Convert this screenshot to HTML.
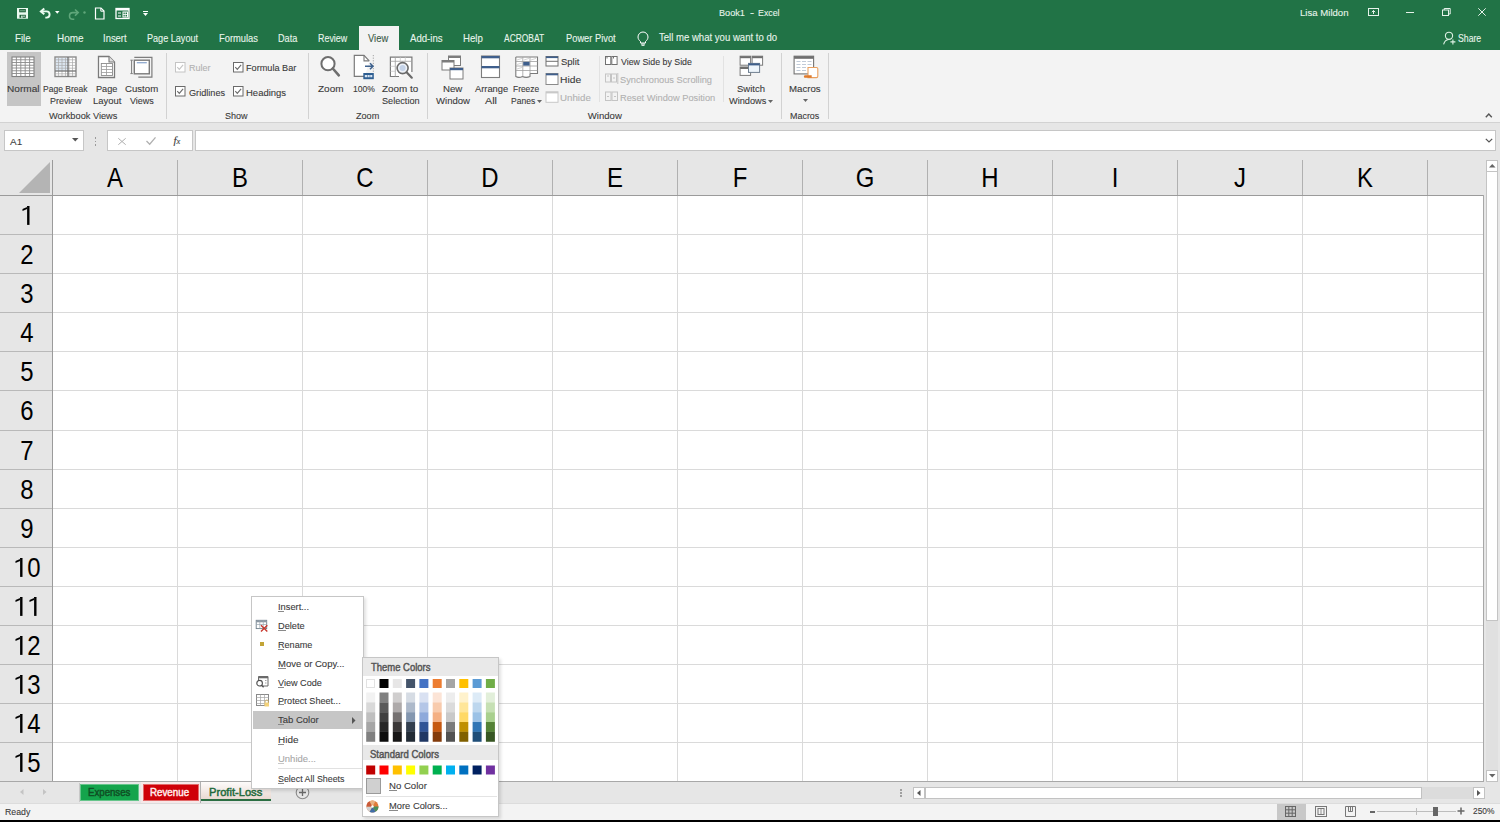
<!DOCTYPE html><html><head><meta charset="utf-8"><title>Book1 - Excel</title><style>
*{margin:0;padding:0;box-sizing:border-box}
html,body{width:1500px;height:822px;overflow:hidden;background:#fff;font-family:"Liberation Sans",sans-serif;position:relative}
.a{position:absolute}
.t{position:absolute;white-space:nowrap;line-height:1;transform-origin:0 0;-webkit-text-stroke:0.1px currentColor}
.h{-webkit-text-stroke:0}
svg{overflow:visible}
</style></head><body>
<div class="a" style="left:0px;top:0px;width:1500px;height:50px;background:#217346;"></div>
<div class="a" style="left:359px;top:26px;width:40px;height:24px;background:#f3f3f3;"></div>
<svg class="a" style="left:16px;top:7px" width="14" height="13" viewBox="0 0 14 13"><rect x="1" y="1" width="11" height="10.7" fill="#eafaf0"/><rect x="3.2" y="2" width="6.6" height="3.3" fill="#1d5e38"/><rect x="4" y="2.8" width="5" height="1.6" fill="#5f9c78"/><rect x="3.5" y="7.8" width="6.3" height="3" fill="#1d5e38"/><rect x="5.2" y="8.6" width="1.4" height="2.2" fill="#eafaf0"/><rect x="7.3" y="8.6" width="1.4" height="1.2" fill="#eafaf0"/></svg>
<svg class="a" style="left:39px;top:6px" width="14" height="13" viewBox="0 0 14 13"><path d="M5.3 2.6L1.9 5.4 5.3 8.2" fill="none" stroke="#eafaf0" stroke-width="2"/><path d="M2.2 5.4h5.3a3.1 3.1 0 0 1 0 6.2H6.3" fill="none" stroke="#eafaf0" stroke-width="1.9"/></svg>
<svg class="a" style="left:55px;top:11px" width="5" height="3" viewBox="0 0 5 3"><path d="M0 0h4.5l-2.25 2.7z" fill="#fff"/></svg>
<svg class="a" style="left:66px;top:7px" width="14" height="13" viewBox="0 0 14 13"><path d="M9 2.5l3.2 3.1L9 8.7" fill="none" stroke="#5fa67a" stroke-width="1.6"/><path d="M12 5.6H6.8a3.3 3.3 0 0 0 0 6.6h1.5" fill="none" stroke="#5fa67a" stroke-width="1.6"/></svg>
<svg class="a" style="left:83px;top:11px" width="3" height="3" viewBox="0 0 3 3"><circle cx="1.5" cy="1.5" r="1.2" fill="#5fa67a"/></svg>
<svg class="a" style="left:94px;top:7px" width="12" height="13" viewBox="0 0 12 13"><path d="M1.5 1h5.5l3 3v8h-8.5z" fill="none" stroke="#fff" stroke-width="1.2"/><path d="M6.8 1v3.2h3.2" fill="none" stroke="#fff" stroke-width="1"/></svg>
<svg class="a" style="left:115px;top:7px" width="15" height="13" viewBox="0 0 15 13"><rect x="1" y="1.5" width="13" height="10" fill="none" stroke="#fff" stroke-width="1.3"/><rect x="1" y="1.5" width="13" height="2" fill="#fff"/><path d="M3 6h3M3 9h3" stroke="#fff" stroke-width="1.2"/><rect x="8" y="5" width="4.5" height="5" fill="none" stroke="#fff" stroke-width="1"/><path d="M8 7.5h4.5M10.2 5v5" stroke="#fff" stroke-width="0.8"/></svg>
<svg class="a" style="left:143px;top:11px" width="5" height="5" viewBox="0 0 5 5"><path d="M0 0.5h5" stroke="#fff" stroke-width="1"/><path d="M0 2h5l-2.5 3z" fill="#fff"/></svg>
<div class="t" style="left:719.2px;top:7.9px;font-size:9.86px;color:#e8f5ec;transform:scaleX(0.927);">Book1</div>
<div class="t" style="left:750.4px;top:7.9px;font-size:9.86px;color:#e8f5ec;transform:scaleX(1.242);">-</div>
<div class="t" style="left:758.0px;top:7.9px;font-size:9.86px;color:#e8f5ec;transform:scaleX(0.896);">Excel</div>
<div class="t" style="left:1300.1px;top:7.7px;font-size:9.86px;color:#e8f5ec;transform:scaleX(0.975);">Lisa Mildon</div>
<svg class="a" style="left:1368px;top:8px" width="11" height="8" viewBox="0 0 11 8"><rect x="0.5" y="0.5" width="10" height="7" fill="none" stroke="#e6f2ea" stroke-width="1"/><path d="M5.5 6v-3.5M3.8 4.2l1.7-1.7 1.7 1.7" fill="none" stroke="#e6f2ea" stroke-width="1"/></svg>
<div class="a" style="left:1406px;top:12px;width:8px;height:1px;background:#e6f2ea;"></div>
<svg class="a" style="left:1442px;top:8px" width="9" height="8" viewBox="0 0 9 8"><rect x="0.5" y="2" width="6" height="5.5" fill="none" stroke="#e6f2ea" stroke-width="1"/><path d="M2.2 2v-1.5h6v5.5h-1.7" fill="none" stroke="#e6f2ea" stroke-width="1"/></svg>
<svg class="a" style="left:1478px;top:8px" width="8" height="8" viewBox="0 0 8 8"><path d="M0.3 0.3l7.4 7.4M7.7 0.3l-7.4 7.4" stroke="#e6f2ea" stroke-width="1"/></svg>
<div class="t" style="left:14.8px;top:33.5px;font-size:10.14px;color:#e8f5ec;transform:scaleX(0.956);">File</div>
<div class="t" style="left:56.7px;top:33.5px;font-size:10.14px;color:#e8f5ec;transform:scaleX(0.982);">Home</div>
<div class="t" style="left:102.7px;top:33.5px;font-size:10.14px;color:#e8f5ec;transform:scaleX(0.934);">Insert</div>
<div class="t" style="left:146.9px;top:33.5px;font-size:10.14px;color:#e8f5ec;transform:scaleX(0.898);">Page Layout</div>
<div class="t" style="left:218.9px;top:33.5px;font-size:10.14px;color:#e8f5ec;transform:scaleX(0.924);">Formulas</div>
<div class="t" style="left:278.3px;top:33.5px;font-size:10.14px;color:#e8f5ec;transform:scaleX(0.903);">Data</div>
<div class="t" style="left:318.0px;top:33.5px;font-size:10.14px;color:#e8f5ec;transform:scaleX(0.881);">Review</div>
<div class="t" style="left:409.6px;top:33.5px;font-size:10.14px;color:#e8f5ec;transform:scaleX(0.950);">Add-ins</div>
<div class="t" style="left:463.1px;top:33.5px;font-size:10.14px;color:#e8f5ec;transform:scaleX(0.953);">Help</div>
<div class="t" style="left:504.2px;top:33.5px;font-size:10.14px;color:#e8f5ec;transform:scaleX(0.833);">ACROBAT</div>
<div class="t" style="left:566.0px;top:33.5px;font-size:10.14px;color:#e8f5ec;transform:scaleX(0.920);">Power Pivot</div>
<div class="t" style="left:368.2px;top:33.5px;font-size:10.14px;color:#3b5a48;transform:scaleX(0.928);">View</div>
<svg class="a" style="left:637px;top:32px" width="12" height="14" viewBox="0 0 12 14"><path d="M3.5 9.5C2 8.3 1 6.8 1 5A5 5 0 0 1 11 5c0 1.8-1 3.3-2.5 4.5v1.5h-5z" fill="none" stroke="#fff" stroke-width="1"/><path d="M4 12h4M4.5 13.3h3" stroke="#fff" stroke-width="1"/></svg>
<div class="t" style="left:658.8px;top:33.4px;font-size:10.14px;color:#e8f5ec;transform:scaleX(0.945);">Tell me what you want to do</div>
<svg class="a" style="left:1442px;top:31px" width="15" height="15" viewBox="0 0 15 15"><circle cx="7" cy="4.8" r="3.6" fill="none" stroke="#dff2e5" stroke-width="1.1"/><path d="M1.6 13.3C2.3 10.6 4.3 8.8 6.6 8.5" fill="none" stroke="#dff2e5" stroke-width="1.1"/><path d="M10.9 8.4v5M8.4 10.9h5" stroke="#dff2e5" stroke-width="1.1"/></svg>
<div class="t" style="left:1458.4px;top:33.8px;font-size:10.43px;color:#e8f5ec;transform:scaleX(0.834);">Share</div>
<div class="a" style="left:0px;top:50px;width:1500px;height:72px;background:#f3f3f3;"></div>
<div class="a" style="left:166px;top:53px;width:1px;height:66px;background:#d2d2d2;"></div>
<div class="a" style="left:308px;top:53px;width:1px;height:66px;background:#d2d2d2;"></div>
<div class="a" style="left:427px;top:53px;width:1px;height:66px;background:#d2d2d2;"></div>
<div class="a" style="left:781px;top:53px;width:1px;height:66px;background:#d2d2d2;"></div>
<div class="a" style="left:828px;top:53px;width:1px;height:66px;background:#d2d2d2;"></div>
<div class="a" style="left:599px;top:56px;width:1px;height:46px;background:#e2e2e2;"></div>
<div class="a" style="left:723px;top:56px;width:1px;height:46px;background:#e2e2e2;"></div>
<div class="a" style="left:7px;top:52px;width:34px;height:54px;background:#c5c5c5;"></div>
<svg class="a" style="left:11px;top:56px" width="24" height="21" viewBox="0 0 24 21"><rect x="1" y="1" width="22" height="19.5" fill="#fff" stroke="#808080" stroke-width="1.1"/><path d="M5.4 1v19" stroke="#8a8a8a" stroke-width="0.9"/><path d="M9.8 1v19" stroke="#8a8a8a" stroke-width="0.9"/><path d="M14.2 1v19" stroke="#8a8a8a" stroke-width="0.9"/><path d="M18.6 1v19" stroke="#8a8a8a" stroke-width="0.9"/><path d="M1 3.75h22" stroke="#8a8a8a" stroke-width="0.9"/><path d="M1 6.50h22" stroke="#8a8a8a" stroke-width="0.9"/><path d="M1 9.25h22" stroke="#8a8a8a" stroke-width="0.9"/><path d="M1 12.00h22" stroke="#8a8a8a" stroke-width="0.9"/><path d="M1 14.75h22" stroke="#8a8a8a" stroke-width="0.9"/><path d="M1 17.50h22" stroke="#8a8a8a" stroke-width="0.9"/></svg>
<svg class="a" style="left:54px;top:56px" width="23" height="22" viewBox="0 0 23 22"><rect x="1" y="1" width="21" height="19.5" fill="#fff" stroke="#8a8a8a" stroke-width="1.4"/><rect x="2" y="2" width="12" height="13" fill="#dde8f3"/><path d="M4.5 1v19" stroke="#a9a9a9" stroke-width="0.7"/><path d="M8.0 1v19" stroke="#a9a9a9" stroke-width="0.7"/><path d="M11.5 1v19" stroke="#a9a9a9" stroke-width="0.7"/><path d="M15.0 1v19" stroke="#a9a9a9" stroke-width="0.7"/><path d="M18.5 1v19" stroke="#a9a9a9" stroke-width="0.7"/><path d="M1 3.8h21" stroke="#a9a9a9" stroke-width="0.7"/><path d="M1 6.6h21" stroke="#a9a9a9" stroke-width="0.7"/><path d="M1 9.4h21" stroke="#a9a9a9" stroke-width="0.7"/><path d="M1 12.2h21" stroke="#a9a9a9" stroke-width="0.7"/><path d="M1 15.0h21" stroke="#a9a9a9" stroke-width="0.7"/><path d="M1 17.8h21" stroke="#a9a9a9" stroke-width="0.7"/><path d="M14 1v19.5M1 15h21" stroke="#6b6b6b" stroke-width="1.2"/></svg>
<svg class="a" style="left:96px;top:54px" width="22" height="26" viewBox="0 0 22 26"><path d="M2.5 2.5H13L18.5 8V23.5H2.5Z" fill="#fff" stroke="#7a7a7a" stroke-width="1.3"/><path d="M13 2.5V8H18.5" fill="#e0e0e0" stroke="#7a7a7a" stroke-width="1.1"/><rect x="5.3" y="9.5" width="11.2" height="12" fill="none" stroke="#8a8a8a" stroke-width="0.9"/><path d="M5.3 12.5h11.2M5.3 15.5h11.2M5.3 18.5h11.2M10.5 9.5v12" stroke="#9a9a9a" stroke-width="0.8"/></svg>
<svg class="a" style="left:128px;top:54px" width="26" height="26" viewBox="0 0 26 26"><path d="M6.3 3.3H23.9V23.1H10.3" fill="none" stroke="#7d7d7d" stroke-width="1.2"/><rect x="6.3" y="6.2" width="15" height="13.6" fill="#fff" stroke="#7a7a7a" stroke-width="1.4"/><path d="M8.8 8.7h10" stroke="#8fa9cf" stroke-width="1.3"/><path d="M3.6 6.2v13.4M2.4 6.2h2.4M2.4 19.6h2.4" stroke="#7d7d7d" stroke-width="1"/></svg>
<div class="t" style="left:7.2px;top:84.0px;font-size:9.57px;color:#3a3a3a;transform:scaleX(1.054);">Normal</div>
<div class="t" style="left:43.1px;top:84.0px;font-size:9.57px;color:#3a3a3a;transform:scaleX(0.890);">Page Break</div>
<div class="t" style="left:50.0px;top:96.1px;font-size:9.57px;color:#3a3a3a;transform:scaleX(0.934);">Preview</div>
<div class="t" style="left:96.3px;top:84.0px;font-size:9.57px;color:#3a3a3a;transform:scaleX(0.960);">Page</div>
<div class="t" style="left:92.7px;top:96.1px;font-size:9.57px;color:#3a3a3a;transform:scaleX(0.986);">Layout</div>
<div class="t" style="left:125.1px;top:84.0px;font-size:9.57px;color:#3a3a3a;transform:scaleX(1.006);">Custom</div>
<div class="t" style="left:129.8px;top:96.1px;font-size:9.57px;color:#3a3a3a;transform:scaleX(0.941);">Views</div>
<div class="t" style="left:48.8px;top:110.9px;font-size:9.57px;color:#3a3a3a;transform:scaleX(0.965);">Workbook Views</div>
<svg class="a" style="left:175px;top:62px" width="11" height="11" viewBox="0 0 11 11"><rect x="0.5" y="0.5" width="9.5" height="9.5" fill="#fff" stroke="#c4c4c4" stroke-width="1"/><path d="M2.3 5.2l2 2.2 3.8-4.6" fill="none" stroke="#c4c4c4" stroke-width="1.1"/></svg>
<svg class="a" style="left:233px;top:62px" width="11" height="11" viewBox="0 0 11 11"><rect x="0.5" y="0.5" width="9.5" height="9.5" fill="#fff" stroke="#6a6a6a" stroke-width="1"/><path d="M2.3 5.2l2 2.2 3.8-4.6" fill="none" stroke="#6a6a6a" stroke-width="1.1"/></svg>
<svg class="a" style="left:175px;top:86px" width="11" height="11" viewBox="0 0 11 11"><rect x="0.5" y="0.5" width="9.5" height="9.5" fill="#fff" stroke="#6a6a6a" stroke-width="1"/><path d="M2.3 5.2l2 2.2 3.8-4.6" fill="none" stroke="#6a6a6a" stroke-width="1.1"/></svg>
<svg class="a" style="left:233px;top:86px" width="11" height="11" viewBox="0 0 11 11"><rect x="0.5" y="0.5" width="9.5" height="9.5" fill="#fff" stroke="#6a6a6a" stroke-width="1"/><path d="M2.3 5.2l2 2.2 3.8-4.6" fill="none" stroke="#6a6a6a" stroke-width="1.1"/></svg>
<div class="t" style="left:188.8px;top:63.3px;font-size:9.57px;color:#b1b1b1;transform:scaleX(0.936);">Ruler</div>
<div class="t" style="left:246.3px;top:63.3px;font-size:9.57px;color:#3a3a3a;transform:scaleX(0.957);">Formula Bar</div>
<div class="t" style="left:189.0px;top:87.5px;font-size:9.57px;color:#3a3a3a;transform:scaleX(0.956);">Gridlines</div>
<div class="t" style="left:246.2px;top:87.5px;font-size:9.57px;color:#3a3a3a;transform:scaleX(0.992);">Headings</div>
<div class="t" style="left:225.4px;top:110.9px;font-size:9.57px;color:#3a3a3a;transform:scaleX(0.943);">Show</div>
<svg class="a" style="left:318px;top:55px" width="24" height="24" viewBox="0 0 24 24"><circle cx="10" cy="8.7" r="6.6" fill="#fff" stroke="#6e6e6e" stroke-width="2"/><path d="M14.8 13.5l6 6.8" stroke="#6e6e6e" stroke-width="2.6" stroke-linecap="round"/></svg>
<svg class="a" style="left:352px;top:53px" width="24" height="28" viewBox="0 0 24 28"><path d="M13 23.3H2.3V2.3H12L17.2 7.9" fill="#fff" stroke="#7a7a7a" stroke-width="1.2"/><path d="M12 2.3V7.9H17.2" fill="none" stroke="#7a7a7a" stroke-width="1.1"/><path d="M21.3 2v18" stroke="#9a9a9a" stroke-width="0.9" stroke-dasharray="1.2 1.4"/><path d="M13 13.3h8M18 10.3l3 3-3 3" fill="none" stroke="#3e628e" stroke-width="1.5"/><rect x="11.3" y="20" width="10.5" height="6.2" fill="#2f5f92"/><path d="M12.8 23.1h7.5" stroke="#d6e4f3" stroke-width="2.4" stroke-dasharray="2.2 0.5"/></svg>
<svg class="a" style="left:388px;top:55px" width="27" height="26" viewBox="0 0 27 26"><path d="M11 21.5H2.4V2.1H23.9V17" fill="#fff" stroke="#7a7a7a" stroke-width="1.2"/><path d="M2.4 6.3H23.9M7.3 2.1V21.5" stroke="#a0a0a0" stroke-width="0.8"/><path d="M12.3 2.1v4.2M17.3 2.1v4.2M2.4 11.3h4.9M2.4 16.3h4.9" stroke="#c4c4c4" stroke-width="0.7"/><circle cx="14.6" cy="13.1" r="5.5" fill="#eef2f8" stroke="#6a6a6a" stroke-width="1.6"/><circle cx="14.6" cy="13.1" r="3" fill="#c5d3e8"/><path d="M18.6 17.3l5.2 5.4" stroke="#6a6a6a" stroke-width="2.2" stroke-linecap="round"/></svg>
<div class="t" style="left:318.4px;top:84.0px;font-size:9.57px;color:#3a3a3a;transform:scaleX(1.045);">Zoom</div>
<div class="t" style="left:353.2px;top:84.0px;font-size:9.57px;color:#3a3a3a;transform:scaleX(0.896);">100%</div>
<div class="t" style="left:382.3px;top:84.0px;font-size:9.57px;color:#3a3a3a;transform:scaleX(1.032);">Zoom to</div>
<div class="t" style="left:382.0px;top:96.1px;font-size:9.57px;color:#3a3a3a;transform:scaleX(0.955);">Selection</div>
<div class="t" style="left:355.7px;top:110.9px;font-size:9.57px;color:#3a3a3a;transform:scaleX(0.952);">Zoom</div>
<svg class="a" style="left:441px;top:55px" width="24" height="26" viewBox="0 0 24 26"><rect x="7.5" y="1" width="12" height="9.5" fill="#fff" stroke="#7d7d7d" stroke-width="1"/><rect x="7.5" y="1" width="12" height="2" fill="#7d7d7d"/><rect x="1" y="5.5" width="12" height="9.5" fill="#fff" stroke="#7d7d7d" stroke-width="1"/><rect x="1" y="5.5" width="12" height="2" fill="#7d7d7d"/><rect x="9" y="13" width="13" height="11" fill="#fff" stroke="#7d7d7d" stroke-width="1"/><rect x="9" y="13" width="13" height="2.2" fill="#3f5f8c"/></svg>
<svg class="a" style="left:480px;top:55px" width="21" height="24" viewBox="0 0 21 24"><rect x="1.5" y="1" width="18" height="21.5" fill="#fff" stroke="#7d7d7d" stroke-width="1.1"/><rect x="1.5" y="1" width="18" height="2.3" fill="#3f5f8c"/><rect x="1.5" y="11" width="18" height="2.3" fill="#3f5f8c"/></svg>
<svg class="a" style="left:514px;top:55px" width="25" height="23" viewBox="0 0 25 23"><path d="M1.8 2H23.5V18.5H16M1.8 2V21.5C3.5 22.6 6.2 22.6 8.5 21.5C10.8 22.6 13.5 22.6 16 21.5V18.5" fill="#fff" stroke="#7a7a7a" stroke-width="1.1"/><path d="M1.8 6.5H23.5M1.8 11H23.5M1.8 15.5H23.5M8.8 2V21.5M16 2V18.5" stroke="#a0a0a0" stroke-width="0.8"/><path d="M3 5l5-1.6M10 5l5-1.6M17 5l5-1.6M3 9.5l5-1.6M3 14l5-1.6" stroke="#b8b8b8" stroke-width="0.6"/><rect x="9.2" y="6.9" width="6.4" height="3.7" fill="#3f5f8c"/></svg>
<svg class="a" style="left:545px;top:55px" width="14" height="12" viewBox="0 0 14 12"><rect x="1" y="1.5" width="12" height="9.5" fill="#fff" stroke="#707070" stroke-width="1"/><rect x="1" y="1.5" width="12" height="1.6" fill="#3f5f8c"/><path d="M1 6.3h12" stroke="#707070" stroke-width="1"/></svg>
<svg class="a" style="left:545px;top:72px" width="14" height="13" viewBox="0 0 14 13"><rect x="1" y="1.5" width="12" height="11" fill="#fff" stroke="#8a8a8a" stroke-width="1"/><rect x="1" y="1.5" width="12" height="1.8" fill="#3f5f8c"/></svg>
<svg class="a" style="left:545px;top:91px" width="14" height="12" viewBox="0 0 14 12"><rect x="1" y="0.8" width="12" height="10.5" fill="#fff" stroke="#c8c8c8" stroke-width="1"/><rect x="1" y="0.8" width="12" height="1.6" fill="#c8c8c8"/></svg>
<div class="t" style="left:442.9px;top:84.0px;font-size:9.57px;color:#3a3a3a;transform:scaleX(1.010);">New</div>
<div class="t" style="left:436.0px;top:96.1px;font-size:9.57px;color:#3a3a3a;">Window</div>
<div class="t" style="left:474.6px;top:84.0px;font-size:9.57px;color:#3a3a3a;transform:scaleX(0.975);">Arrange</div>
<div class="t" style="left:484.9px;top:96.1px;font-size:9.57px;color:#3a3a3a;transform:scaleX(1.126);">All</div>
<div class="t" style="left:513.0px;top:84.0px;font-size:9.57px;color:#3a3a3a;transform:scaleX(0.879);">Freeze</div>
<div class="t" style="left:510.6px;top:96.1px;font-size:9.57px;color:#3a3a3a;transform:scaleX(0.892);">Panes</div>
<svg class="a" style="left:537px;top:100px" width="5" height="3" viewBox="0 0 5 3"><path d="M0 0h5l-2.5 3z" fill="#666"/></svg>
<div class="t" style="left:560.6px;top:57.1px;font-size:9.57px;color:#3a3a3a;transform:scaleX(0.993);">Split</div>
<div class="t" style="left:560.2px;top:74.7px;font-size:9.57px;color:#3a3a3a;transform:scaleX(1.073);">Hide</div>
<div class="t" style="left:560.3px;top:92.8px;font-size:9.57px;color:#b1b1b1;transform:scaleX(1.018);">Unhide</div>
<svg class="a" style="left:605px;top:56px" width="13" height="10" viewBox="0 0 13 10"><rect x="0.5" y="0.5" width="5.3" height="8" fill="#fff" stroke="#707070" stroke-width="1"/><rect x="6.8" y="0.5" width="5.3" height="8" fill="#fff" stroke="#707070" stroke-width="1"/><path d="M2 0.5v2M8.5 0.5v2" stroke="#707070" stroke-width="1"/></svg>
<svg class="a" style="left:605px;top:73px" width="14" height="12" viewBox="0 0 14 12"><rect x="0.5" y="1" width="5" height="8" fill="none" stroke="#c4c4c4" stroke-width="1"/><rect x="6.5" y="1" width="5" height="8" fill="none" stroke="#c4c4c4" stroke-width="1"/><path d="M12.8 0v11M2 3h2M8 5h2" stroke="#c4c4c4" stroke-width="1"/></svg>
<svg class="a" style="left:605px;top:91px" width="13" height="11" viewBox="0 0 13 11"><rect x="0.5" y="1" width="5.5" height="8.5" fill="none" stroke="#c4c4c4" stroke-width="1"/><rect x="7" y="1" width="5.5" height="8.5" fill="none" stroke="#c4c4c4" stroke-width="1"/><path d="M2 5.5h2M9 5.5h2" stroke="#c4c4c4" stroke-width="1.2"/></svg>
<div class="t" style="left:620.8px;top:57.1px;font-size:9.57px;color:#3a3a3a;transform:scaleX(0.922);">View Side by Side</div>
<div class="t" style="left:620.4px;top:75.2px;font-size:9.57px;color:#b1b1b1;transform:scaleX(0.967);">Synchronous Scrolling</div>
<div class="t" style="left:620.1px;top:92.9px;font-size:9.57px;color:#b1b1b1;transform:scaleX(0.968);">Reset Window Position</div>
<div class="t" style="left:587.8px;top:110.9px;font-size:9.57px;color:#3a3a3a;">Window</div>
<svg class="a" style="left:738px;top:54px" width="27" height="24" viewBox="0 0 27 24"><rect x="2.1" y="2.2" width="10.5" height="9" fill="#fff" stroke="#7a7a7a" stroke-width="1"/><rect x="2.1" y="2.2" width="10.5" height="2" fill="#6e6e6e"/><rect x="14.1" y="2.2" width="10.5" height="9" fill="#fff" stroke="#7a7a7a" stroke-width="1"/><rect x="14.1" y="2.2" width="10.5" height="2" fill="#6e6e6e"/><rect x="2.1" y="13" width="10.5" height="8.4" fill="#fff" stroke="#7a7a7a" stroke-width="1"/><rect x="2.1" y="13" width="10.5" height="2" fill="#6e6e6e"/><rect x="10.5" y="9.4" width="11.1" height="9" fill="#eef5fb" stroke="#6f7f90" stroke-width="1"/><rect x="10.5" y="9.4" width="11.1" height="2" fill="#3f5f8c"/></svg>
<div class="t" style="left:737.4px;top:84.0px;font-size:9.57px;color:#3a3a3a;transform:scaleX(0.992);">Switch</div>
<div class="t" style="left:729.0px;top:96.1px;font-size:9.57px;color:#3a3a3a;transform:scaleX(0.963);">Windows</div>
<svg class="a" style="left:768px;top:100px" width="5" height="3" viewBox="0 0 5 3"><path d="M0 0h5l-2.5 3z" fill="#666"/></svg>
<svg class="a" style="left:792px;top:54px" width="28" height="26" viewBox="0 0 28 26"><rect x="2.1" y="2.2" width="19.5" height="17.7" fill="#fff" stroke="#737373" stroke-width="1.1"/><rect x="2.1" y="2.2" width="19.5" height="2.6" fill="#6e6e6e"/><path d="M4.5 7.5h4M10 7.5h4M15.5 7.5h4M4.5 10.5h4M10 10.5h4M15.5 10.5h4M4.5 13.5h4M10 13.5h4M4.5 16.5h4M10 16.5h4" stroke="#b9c4d2" stroke-width="0.9"/><path d="M16 13.5h8.5c0.8 0 1.3 0.5 1.3 1.3v7.5c0 0.8-0.5 1.3-1.3 1.3H16z" fill="#fff" stroke="#e9a060" stroke-width="1.1"/><path d="M13.2 21.2h6.5v2.6h-6.5c-0.8 0-1.3-0.6-1.3-1.3s0.5-1.3 1.3-1.3z" fill="#e07b2c"/></svg>
<div class="t" style="left:789.0px;top:84.0px;font-size:9.57px;color:#3a3a3a;transform:scaleX(1.011);">Macros</div>
<svg class="a" style="left:803px;top:99px" width="5" height="3" viewBox="0 0 5 3"><path d="M0 0h5l-2.5 3z" fill="#666"/></svg>
<div class="t" style="left:790.0px;top:110.9px;font-size:9.57px;color:#3a3a3a;transform:scaleX(0.935);">Macros</div>
<svg class="a" style="left:1485px;top:112px" width="8" height="7" viewBox="0 0 8 7"><path d="M0.8 5.2l3 -3.2 3 3.2" fill="none" stroke="#555" stroke-width="1.4"/></svg>
<div class="a" style="left:0px;top:122px;width:1500px;height:38px;background:#e6e6e6;"></div>
<div class="a" style="left:0px;top:122px;width:1500px;height:1px;background:#d2d2d2;"></div>
<div class="a" style="left:4px;top:130px;width:80px;height:21px;background:#fff;border:1px solid #c6c6c6"></div>
<div class="t" style="left:9.7px;top:136.5px;font-size:9.57px;color:#3a3a3a;transform:scaleX(1.041);">A1</div>
<svg class="a" style="left:72px;top:138px" width="7" height="4" viewBox="0 0 7 4"><path d="M0 0h6.5l-3.25 3.5z" fill="#555"/></svg>
<div class="a" style="left:94.5px;top:137px;width:1.5px;height:1.5px;background:#9a9a9a;"></div>
<div class="a" style="left:94.5px;top:140.5px;width:1.5px;height:1.5px;background:#9a9a9a;"></div>
<div class="a" style="left:94.5px;top:144px;width:1.5px;height:1.5px;background:#9a9a9a;"></div>
<div class="a" style="left:107px;top:130px;width:86px;height:21px;background:#fff;border:1px solid #c6c6c6"></div>
<svg class="a" style="left:117.5px;top:137.5px" width="8" height="7" viewBox="0 0 8 7"><path d="M0.3 0.3l7.4 6.4M7.7 0.3l-7.4 6.4" stroke="#b0b0b0" stroke-width="1"/></svg>
<svg class="a" style="left:145.5px;top:137px" width="10" height="8" viewBox="0 0 10 8"><path d="M0.5 4l3.2 3.2 5.8-6.8" fill="none" stroke="#b0b0b0" stroke-width="1.3"/></svg>
<div class="t" style="left:173.5px;top:135px;font-size:11px;font-family:'Liberation Serif',serif;font-style:italic;color:#3a3a3a">f<span style="font-size:8.5px">x</span></div>
<div class="a" style="left:195px;top:130px;width:1301px;height:21px;background:#fff;border:1px solid #c6c6c6"></div>
<svg class="a" style="left:1485px;top:138px" width="8" height="5" viewBox="0 0 8 5"><path d="M0.8 0.8l3.2 3.2 3.2-3.2" fill="none" stroke="#555" stroke-width="1.2"/></svg>
<div class="a" style="left:0px;top:160px;width:1500px;height:622px;background:#e6e6e6;"></div>
<div class="a" style="left:0px;top:160px;width:1483px;height:35px;background:#e6e6e6;"></div>
<div class="a" style="left:53px;top:196px;width:1430px;height:586px;background:#fff;"></div>
<div class="a" style="left:52px;top:160px;width:1px;height:622px;background:#9b9b9b;"></div>
<div class="a" style="left:177px;top:160px;width:1px;height:35px;background:#b0b0b0;"></div>
<div class="a" style="left:177px;top:196px;width:1px;height:586px;background:#dadada;"></div>
<div class="a" style="left:302px;top:160px;width:1px;height:35px;background:#b0b0b0;"></div>
<div class="a" style="left:302px;top:196px;width:1px;height:586px;background:#dadada;"></div>
<div class="a" style="left:427px;top:160px;width:1px;height:35px;background:#b0b0b0;"></div>
<div class="a" style="left:427px;top:196px;width:1px;height:586px;background:#dadada;"></div>
<div class="a" style="left:552px;top:160px;width:1px;height:35px;background:#b0b0b0;"></div>
<div class="a" style="left:552px;top:196px;width:1px;height:586px;background:#dadada;"></div>
<div class="a" style="left:677px;top:160px;width:1px;height:35px;background:#b0b0b0;"></div>
<div class="a" style="left:677px;top:196px;width:1px;height:586px;background:#dadada;"></div>
<div class="a" style="left:802px;top:160px;width:1px;height:35px;background:#b0b0b0;"></div>
<div class="a" style="left:802px;top:196px;width:1px;height:586px;background:#dadada;"></div>
<div class="a" style="left:927px;top:160px;width:1px;height:35px;background:#b0b0b0;"></div>
<div class="a" style="left:927px;top:196px;width:1px;height:586px;background:#dadada;"></div>
<div class="a" style="left:1052px;top:160px;width:1px;height:35px;background:#b0b0b0;"></div>
<div class="a" style="left:1052px;top:196px;width:1px;height:586px;background:#dadada;"></div>
<div class="a" style="left:1177px;top:160px;width:1px;height:35px;background:#b0b0b0;"></div>
<div class="a" style="left:1177px;top:196px;width:1px;height:586px;background:#dadada;"></div>
<div class="a" style="left:1302px;top:160px;width:1px;height:35px;background:#b0b0b0;"></div>
<div class="a" style="left:1302px;top:196px;width:1px;height:586px;background:#dadada;"></div>
<div class="a" style="left:1427px;top:160px;width:1px;height:35px;background:#b0b0b0;"></div>
<div class="a" style="left:1427px;top:196px;width:1px;height:586px;background:#dadada;"></div>
<div class="a" style="left:1483px;top:195px;width:1px;height:587px;background:#a8a8a8;"></div>
<div class="t h" style="left:75px;width:80px;text-align:center;top:163.5px;font-size:27.5px;color:#000;transform:scaleX(0.87);transform-origin:40px 0">A</div>
<div class="t h" style="left:200px;width:80px;text-align:center;top:163.5px;font-size:27.5px;color:#000;transform:scaleX(0.87);transform-origin:40px 0">B</div>
<div class="t h" style="left:325px;width:80px;text-align:center;top:163.5px;font-size:27.5px;color:#000;transform:scaleX(0.87);transform-origin:40px 0">C</div>
<div class="t h" style="left:450px;width:80px;text-align:center;top:163.5px;font-size:27.5px;color:#000;transform:scaleX(0.87);transform-origin:40px 0">D</div>
<div class="t h" style="left:575px;width:80px;text-align:center;top:163.5px;font-size:27.5px;color:#000;transform:scaleX(0.87);transform-origin:40px 0">E</div>
<div class="t h" style="left:700px;width:80px;text-align:center;top:163.5px;font-size:27.5px;color:#000;transform:scaleX(0.87);transform-origin:40px 0">F</div>
<div class="t h" style="left:825px;width:80px;text-align:center;top:163.5px;font-size:27.5px;color:#000;transform:scaleX(0.87);transform-origin:40px 0">G</div>
<div class="t h" style="left:950px;width:80px;text-align:center;top:163.5px;font-size:27.5px;color:#000;transform:scaleX(0.87);transform-origin:40px 0">H</div>
<div class="t h" style="left:1075px;width:80px;text-align:center;top:163.5px;font-size:27.5px;color:#000;transform:scaleX(0.87);transform-origin:40px 0">I</div>
<div class="t h" style="left:1200px;width:80px;text-align:center;top:163.5px;font-size:27.5px;color:#000;transform:scaleX(0.87);transform-origin:40px 0">J</div>
<div class="t h" style="left:1325px;width:80px;text-align:center;top:163.5px;font-size:27.5px;color:#000;transform:scaleX(0.87);transform-origin:40px 0">K</div>
<div class="a" style="left:0px;top:195px;width:1483px;height:1px;background:#9b9b9b;"></div>
<div class="a" style="left:0px;top:234px;width:52px;height:1px;background:#b9b9b9;"></div>
<div class="a" style="left:53px;top:234px;width:1430px;height:1px;background:#dadada;"></div>
<div class="a" style="left:0px;top:273px;width:52px;height:1px;background:#b9b9b9;"></div>
<div class="a" style="left:53px;top:273px;width:1430px;height:1px;background:#dadada;"></div>
<div class="a" style="left:0px;top:312px;width:52px;height:1px;background:#b9b9b9;"></div>
<div class="a" style="left:53px;top:312px;width:1430px;height:1px;background:#dadada;"></div>
<div class="a" style="left:0px;top:351px;width:52px;height:1px;background:#b9b9b9;"></div>
<div class="a" style="left:53px;top:351px;width:1430px;height:1px;background:#dadada;"></div>
<div class="a" style="left:0px;top:390px;width:52px;height:1px;background:#b9b9b9;"></div>
<div class="a" style="left:53px;top:390px;width:1430px;height:1px;background:#dadada;"></div>
<div class="a" style="left:0px;top:430px;width:52px;height:1px;background:#b9b9b9;"></div>
<div class="a" style="left:53px;top:430px;width:1430px;height:1px;background:#dadada;"></div>
<div class="a" style="left:0px;top:469px;width:52px;height:1px;background:#b9b9b9;"></div>
<div class="a" style="left:53px;top:469px;width:1430px;height:1px;background:#dadada;"></div>
<div class="a" style="left:0px;top:508px;width:52px;height:1px;background:#b9b9b9;"></div>
<div class="a" style="left:53px;top:508px;width:1430px;height:1px;background:#dadada;"></div>
<div class="a" style="left:0px;top:547px;width:52px;height:1px;background:#b9b9b9;"></div>
<div class="a" style="left:53px;top:547px;width:1430px;height:1px;background:#dadada;"></div>
<div class="a" style="left:0px;top:586px;width:52px;height:1px;background:#b9b9b9;"></div>
<div class="a" style="left:53px;top:586px;width:1430px;height:1px;background:#dadada;"></div>
<div class="a" style="left:0px;top:625px;width:52px;height:1px;background:#b9b9b9;"></div>
<div class="a" style="left:53px;top:625px;width:1430px;height:1px;background:#dadada;"></div>
<div class="a" style="left:0px;top:664px;width:52px;height:1px;background:#b9b9b9;"></div>
<div class="a" style="left:53px;top:664px;width:1430px;height:1px;background:#dadada;"></div>
<div class="a" style="left:0px;top:703px;width:52px;height:1px;background:#b9b9b9;"></div>
<div class="a" style="left:53px;top:703px;width:1430px;height:1px;background:#dadada;"></div>
<div class="a" style="left:0px;top:742px;width:52px;height:1px;background:#b9b9b9;"></div>
<div class="a" style="left:53px;top:742px;width:1430px;height:1px;background:#dadada;"></div>
<div class="a" style="left:0px;top:782px;width:52px;height:1px;background:#b9b9b9;"></div>
<div class="a" style="left:53px;top:782px;width:1430px;height:1px;background:#dadada;"></div>
<svg class="a" style="left:18.7px;top:206px" width="14" height="20" viewBox="0 0 14 20"><rect x="8.1" y="0" width="2.4" height="18.9" fill="#000"/><path d="M10.5 0L3.5 2.9V4.9L8.1 3V0z" fill="#000"/></svg>
<div class="t h" style="left:6.50px;width:40px;text-align:center;top:240.50px;font-size:27.5px;color:#000;transform:scaleX(0.87);transform-origin:20px 0">2</div>
<div class="t h" style="left:6.50px;width:40px;text-align:center;top:279.50px;font-size:27.5px;color:#000;transform:scaleX(0.87);transform-origin:20px 0">3</div>
<div class="t h" style="left:6.50px;width:40px;text-align:center;top:318.50px;font-size:27.5px;color:#000;transform:scaleX(0.87);transform-origin:20px 0">4</div>
<div class="t h" style="left:6.50px;width:40px;text-align:center;top:357.50px;font-size:27.5px;color:#000;transform:scaleX(0.87);transform-origin:20px 0">5</div>
<div class="t h" style="left:6.50px;width:40px;text-align:center;top:396.50px;font-size:27.5px;color:#000;transform:scaleX(0.87);transform-origin:20px 0">6</div>
<div class="t h" style="left:6.50px;width:40px;text-align:center;top:436.50px;font-size:27.5px;color:#000;transform:scaleX(0.87);transform-origin:20px 0">7</div>
<div class="t h" style="left:6.50px;width:40px;text-align:center;top:475.50px;font-size:27.5px;color:#000;transform:scaleX(0.87);transform-origin:20px 0">8</div>
<div class="t h" style="left:6.50px;width:40px;text-align:center;top:514.50px;font-size:27.5px;color:#000;transform:scaleX(0.87);transform-origin:20px 0">9</div>
<svg class="a" style="left:11.7px;top:558px" width="14" height="20" viewBox="0 0 14 20"><rect x="8.1" y="0" width="2.4" height="18.9" fill="#000"/><path d="M10.5 0L3.5 2.9V4.9L8.1 3V0z" fill="#000"/></svg>
<div class="t h" style="left:13.50px;width:40px;text-align:center;top:553.50px;font-size:27.5px;color:#000;transform:scaleX(0.87);transform-origin:20px 0">0</div>
<svg class="a" style="left:11.7px;top:597px" width="14" height="20" viewBox="0 0 14 20"><rect x="8.1" y="0" width="2.4" height="18.9" fill="#000"/><path d="M10.5 0L3.5 2.9V4.9L8.1 3V0z" fill="#000"/></svg>
<svg class="a" style="left:25.7px;top:597px" width="14" height="20" viewBox="0 0 14 20"><rect x="8.1" y="0" width="2.4" height="18.9" fill="#000"/><path d="M10.5 0L3.5 2.9V4.9L8.1 3V0z" fill="#000"/></svg>
<svg class="a" style="left:11.7px;top:636px" width="14" height="20" viewBox="0 0 14 20"><rect x="8.1" y="0" width="2.4" height="18.9" fill="#000"/><path d="M10.5 0L3.5 2.9V4.9L8.1 3V0z" fill="#000"/></svg>
<div class="t h" style="left:13.50px;width:40px;text-align:center;top:631.50px;font-size:27.5px;color:#000;transform:scaleX(0.87);transform-origin:20px 0">2</div>
<svg class="a" style="left:11.7px;top:675px" width="14" height="20" viewBox="0 0 14 20"><rect x="8.1" y="0" width="2.4" height="18.9" fill="#000"/><path d="M10.5 0L3.5 2.9V4.9L8.1 3V0z" fill="#000"/></svg>
<div class="t h" style="left:13.50px;width:40px;text-align:center;top:670.50px;font-size:27.5px;color:#000;transform:scaleX(0.87);transform-origin:20px 0">3</div>
<svg class="a" style="left:11.7px;top:714px" width="14" height="20" viewBox="0 0 14 20"><rect x="8.1" y="0" width="2.4" height="18.9" fill="#000"/><path d="M10.5 0L3.5 2.9V4.9L8.1 3V0z" fill="#000"/></svg>
<div class="t h" style="left:13.50px;width:40px;text-align:center;top:709.50px;font-size:27.5px;color:#000;transform:scaleX(0.87);transform-origin:20px 0">4</div>
<svg class="a" style="left:11.7px;top:753px" width="14" height="20" viewBox="0 0 14 20"><rect x="8.1" y="0" width="2.4" height="18.9" fill="#000"/><path d="M10.5 0L3.5 2.9V4.9L8.1 3V0z" fill="#000"/></svg>
<div class="t h" style="left:13.50px;width:40px;text-align:center;top:748.50px;font-size:27.5px;color:#000;transform:scaleX(0.87);transform-origin:20px 0">5</div>
<svg class="a" style="left:0px;top:160px" width="52" height="35" viewBox="0 0 52 35"><polygon points="19,33 50,33 50,2" fill="#b4b4b4"/></svg>
<div class="a" style="left:1486px;top:160px;width:12px;height:622px;background:#e0e0e0;"></div>
<div class="a" style="left:1486px;top:160px;width:12px;height:12px;background:#fff;border:1px solid #c2c2c2"></div>
<svg class="a" style="left:1489px;top:164px" width="7" height="4" viewBox="0 0 7 4"><path d="M0 3.5h6.5L3.25 0z" fill="#666"/></svg>
<div class="a" style="left:1486px;top:171px;width:12px;height:450px;background:#fff;border:1px solid #c4c4c4"></div>
<div class="a" style="left:1486px;top:770px;width:12px;height:12px;background:#fff;border:1px solid #c2c2c2"></div>
<svg class="a" style="left:1489px;top:774px" width="7" height="4" viewBox="0 0 7 4"><path d="M0 0h6.5L3.25 3.5z" fill="#666"/></svg>
<div class="a" style="left:0px;top:782px;width:1500px;height:21px;background:#e6e6e6;"></div>
<div class="a" style="left:0px;top:781px;width:1483px;height:1px;background:#a8a8a8;"></div>
<svg class="a" style="left:20px;top:789px" width="4" height="6" viewBox="0 0 4 6"><path d="M3.5 0v6L0 3z" fill="#c4c4c4"/></svg>
<svg class="a" style="left:43px;top:789px" width="4" height="6" viewBox="0 0 4 6"><path d="M0 0v6l3.5-3z" fill="#c4c4c4"/></svg>
<div class="a" style="left:79px;top:783px;width:1px;height:19px;background:#c8c8c8;"></div>
<div class="a" style="left:80px;top:784px;width:59px;height:17px;background:#14a44c;border:1px solid #66c58b"></div>
<div class="t" style="left:87.9px;top:788.0px;font-size:10.43px;color:#0f4f24;transform:scaleX(0.926);-webkit-text-stroke:0.45px currentColor;">Expenses</div>
<div class="a" style="left:141px;top:782px;width:60px;height:21px;background:#f6e8e8;border-right:1px solid #b0b0b0"></div>
<div class="a" style="left:143px;top:784px;width:56px;height:17px;background:#cf0008;border:1px solid #e26a6a"></div>
<div class="t" style="left:150.0px;top:788.0px;font-size:10.43px;color:#ffecec;transform:scaleX(0.937);-webkit-text-stroke:0.45px currentColor;">Revenue</div>
<div class="a" style="left:201px;top:782px;width:70px;height:17px;background:linear-gradient(#fdfbfa,#e9d9d2)"></div>
<div class="a" style="left:201px;top:798.5px;width:70px;height:2px;background:#2a6e42;"></div>
<div class="t" style="left:208.8px;top:788.0px;font-size:10.43px;color:#1f6a3c;transform:scaleX(1.068);-webkit-text-stroke:0.45px currentColor;">Profit-Loss</div>
<svg class="a" style="left:295px;top:785px" width="15" height="15" viewBox="0 0 15 15"><circle cx="7.5" cy="7.5" r="6.3" fill="none" stroke="#8a8a8a" stroke-width="1.1"/><path d="M7.5 4v7M4 7.5h7" stroke="#6a6a6a" stroke-width="1.3"/></svg>
<div class="a" style="left:900px;top:789px;width:1.5px;height:1.5px;background:#a0a0a0;"></div>
<div class="a" style="left:900px;top:792px;width:1.5px;height:1.5px;background:#a0a0a0;"></div>
<div class="a" style="left:900px;top:795px;width:1.5px;height:1.5px;background:#a0a0a0;"></div>
<div class="a" style="left:913px;top:787px;width:572px;height:12px;background:#dcdcdc;"></div>
<div class="a" style="left:913px;top:787px;width:12px;height:12px;background:#fff;border:1px solid #c2c2c2"></div>
<svg class="a" style="left:917px;top:790px" width="4" height="6" viewBox="0 0 4 6"><path d="M3.5 0v6L0 3z" fill="#555"/></svg>
<div class="a" style="left:925px;top:787px;width:497px;height:12px;background:#fff;border:1px solid #c2c2c2"></div>
<div class="a" style="left:1473px;top:787px;width:12px;height:12px;background:#fff;border:1px solid #c2c2c2"></div>
<svg class="a" style="left:1477px;top:790px" width="4" height="6" viewBox="0 0 4 6"><path d="M0 0v6l3.5-3z" fill="#555"/></svg>
<div class="a" style="left:0px;top:803px;width:1500px;height:17px;background:#f3f3f3;"></div>
<div class="a" style="left:0px;top:803px;width:1500px;height:1px;background:#dcdcdc;"></div>
<div class="a" style="left:0px;top:820px;width:1500px;height:2px;background:#000;"></div>
<div class="t" style="left:4.6px;top:806.5px;font-size:9.86px;color:#3a3a3a;transform:scaleX(0.890);">Ready</div>
<div class="a" style="left:1277px;top:804px;width:29px;height:16px;background:#c8c8c8;"></div>
<svg class="a" style="left:1285px;top:806px" width="12" height="11" viewBox="0 0 12 11"><rect x="0.5" y="0.5" width="10" height="10" fill="none" stroke="#666" stroke-width="1"/><path d="M3.8 0.5v10M7.2 0.5v10M0.5 3.8h10M0.5 7.2h10" stroke="#666" stroke-width="1"/></svg>
<svg class="a" style="left:1315px;top:806px" width="12" height="11" viewBox="0 0 12 11"><rect x="0.5" y="0.5" width="11" height="10" fill="none" stroke="#777" stroke-width="1"/><rect x="3" y="2.5" width="6" height="6" fill="none" stroke="#777" stroke-width="1"/><path d="M6 2.5v6" stroke="#777" stroke-width="0.8"/></svg>
<svg class="a" style="left:1345px;top:806px" width="12" height="11" viewBox="0 0 12 11"><path d="M0.5 0.5h10v10h-10z" fill="none" stroke="#777" stroke-width="1"/><path d="M3.5 0.5v5h4v-5M5.5 0.5v5" fill="none" stroke="#777" stroke-width="1"/></svg>
<div class="a" style="left:1370px;top:811px;width:4.5px;height:1.5px;background:#666;"></div>
<div class="a" style="left:1377px;top:811px;width:79px;height:1px;background:#bdbdbd;"></div>
<div class="a" style="left:1416px;top:808px;width:1px;height:7px;background:#bdbdbd;"></div>
<div class="a" style="left:1433px;top:807px;width:5px;height:9px;background:#666;"></div>
<svg class="a" style="left:1457px;top:807px" width="8" height="8" viewBox="0 0 8 8"><path d="M4 0.5v7M0.5 4h7" stroke="#666" stroke-width="1.5"/></svg>
<div class="t" style="left:1472.8px;top:806.4px;font-size:9.86px;color:#3a3a3a;transform:scaleX(0.853);">250%</div>
<div class="a" style="left:251px;top:596px;width:113px;height:193px;background:#fff;border:1px solid #c6c6c6;box-shadow:2px 2px 3px rgba(0,0,0,0.12)"></div>
<div class="a" style="left:253px;top:711px;width:110px;height:18px;background:#c6c6c6;"></div>
<div class="a" style="left:278px;top:768px;width:84px;height:1px;background:#e1e1e1;"></div>
<div class="t" style="left:277.6px;top:602.3px;font-size:9.78px;color:#3a3a3a;transform:scaleX(0.951);">Insert...</div>
<div class="a" style="left:278px;top:611px;width:6px;height:1px;background:#8a8a8a;"></div>
<div class="t" style="left:277.7px;top:621.3px;font-size:9.78px;color:#3a3a3a;transform:scaleX(0.946);">Delete</div>
<div class="a" style="left:278px;top:630px;width:8px;height:1px;background:#8a8a8a;"></div>
<div class="t" style="left:277.7px;top:640.3px;font-size:9.78px;color:#3a3a3a;transform:scaleX(0.931);">Rename</div>
<div class="a" style="left:278px;top:649px;width:6px;height:1px;background:#8a8a8a;"></div>
<div class="t" style="left:277.6px;top:659.3px;font-size:9.78px;color:#3a3a3a;transform:scaleX(0.974);">Move or Copy...</div>
<div class="a" style="left:278px;top:668px;width:8px;height:1px;background:#8a8a8a;"></div>
<div class="t" style="left:278.4px;top:678.3px;font-size:9.78px;color:#3a3a3a;transform:scaleX(0.933);">View Code</div>
<div class="a" style="left:278px;top:687px;width:6px;height:1px;background:#8a8a8a;"></div>
<div class="t" style="left:277.7px;top:695.5px;font-size:9.78px;color:#3a3a3a;transform:scaleX(0.931);">Protect Sheet...</div>
<div class="a" style="left:278px;top:704.2px;width:6px;height:1px;background:#8a8a8a;"></div>
<div class="t" style="left:278.2px;top:715.1px;font-size:9.78px;color:#3a3a3a;transform:scaleX(0.973);">Tab Color</div>
<div class="a" style="left:278px;top:723.8px;width:6px;height:1px;background:#8a8a8a;"></div>
<div class="t" style="left:277.6px;top:735.3px;font-size:9.78px;color:#3a3a3a;transform:scaleX(1.017);">Hide</div>
<div class="a" style="left:278px;top:744px;width:6px;height:1px;background:#8a8a8a;"></div>
<div class="t" style="left:277.7px;top:754.3px;font-size:9.78px;color:#a6a6a6;transform:scaleX(0.970);">Unhide...</div>
<div class="a" style="left:278px;top:763px;width:6px;height:1px;background:#c8c8c8;"></div>
<div class="t" style="left:278.0px;top:774.3px;font-size:9.78px;color:#3a3a3a;transform:scaleX(0.907);">Select All Sheets</div>
<div class="a" style="left:278px;top:783px;width:6px;height:1px;background:#8a8a8a;"></div>
<svg class="a" style="left:352px;top:717px" width="4" height="6" viewBox="0 0 4 6"><path d="M0 0v7l3.5-3.5z" fill="#555"/></svg>
<svg class="a" style="left:255px;top:619px" width="15" height="14" viewBox="0 0 15 14"><rect x="1.2" y="1.3" width="10.5" height="8.3" fill="#fff" stroke="#6f7f8a" stroke-width="0.9"/><rect x="1.2" y="1.3" width="10.5" height="2" fill="#8c98a3"/><path d="M1.2 5.5h10.5M4.8 1.3v8.3M8.3 1.3v8.3" stroke="#9aa6b0" stroke-width="0.7"/><path d="M6 6.3l6.3 6.3M12.3 6.3l-6.3 6.3" stroke="#c8372d" stroke-width="1.4"/></svg>
<div class="a" style="left:260.3px;top:642px;width:3.5px;height:3.5px;background:#c2a436;"></div>
<svg class="a" style="left:255px;top:675px" width="14" height="13" viewBox="0 0 14 13"><path d="M3.5 5V1.5h9.5v9.5H8" fill="none" stroke="#6a6a6a" stroke-width="1"/><rect x="3.5" y="1.5" width="9.5" height="1.8" fill="#6a6a6a"/><path d="M10 5.5h1.5M10 8h1.5" stroke="#8a8a8a" stroke-width="0.8"/><circle cx="4.6" cy="8.2" r="2.8" fill="#fff" stroke="#4d4d4d" stroke-width="1.1"/><path d="M6.6 10.2l2 2" stroke="#4d4d4d" stroke-width="1.3"/></svg>
<svg class="a" style="left:256px;top:694px" width="16" height="15" viewBox="0 0 16 15"><rect x="0.5" y="0.5" width="12" height="11" fill="#fff" stroke="#8a8a8a" stroke-width="1"/><path d="M0.5 3.5h12M0.5 6.5h12M0.5 9.5h12M4.5 0.5v11M8.5 0.5v11" stroke="#a5a5a5" stroke-width="0.7"/><rect x="8.5" y="8.5" width="4.5" height="4" fill="#f3d27a"/><path d="M9.3 8.5v-1a1.5 1.5 0 0 1 3 0v1" fill="none" stroke="#d0b060" stroke-width="0.9"/></svg>
<div class="a" style="left:362px;top:657px;width:137px;height:160px;background:#fff;border:1px solid #c6c6c6;box-shadow:2px 2px 3px rgba(0,0,0,0.12)"></div>
<div class="a" style="left:363px;top:658px;width:135px;height:18px;background:#e9e9e9;"></div>
<div class="t" style="left:370.6px;top:663.1px;font-size:10.43px;color:#555;transform:scaleX(0.909);-webkit-text-stroke:0.45px currentColor;">Theme Colors</div>
<svg class="a" style="left:362px;top:657px" width="137" height="160" viewBox="0 0 137 160"><rect x="4.2" y="22" width="9" height="9" fill="#FFFFFF"/><rect x="4.2" y="35.50" width="9" height="9.9" fill="#F2F2F2"/><rect x="4.2" y="45.34" width="9" height="9.9" fill="#D9D9D9"/><rect x="4.2" y="55.18" width="9" height="9.9" fill="#BFBFBF"/><rect x="4.2" y="65.02" width="9" height="9.9" fill="#A6A6A6"/><rect x="4.2" y="74.86" width="9" height="9.9" fill="#808080"/><rect x="4.2" y="108.5" width="9" height="9" fill="#C00000"/><rect x="17.5" y="22" width="9" height="9" fill="#000000"/><rect x="17.5" y="35.50" width="9" height="9.9" fill="#808080"/><rect x="17.5" y="45.34" width="9" height="9.9" fill="#595959"/><rect x="17.5" y="55.18" width="9" height="9.9" fill="#404040"/><rect x="17.5" y="65.02" width="9" height="9.9" fill="#262626"/><rect x="17.5" y="74.86" width="9" height="9.9" fill="#0D0D0D"/><rect x="17.5" y="108.5" width="9" height="9" fill="#FF0000"/><rect x="30.8" y="22" width="9" height="9" fill="#E7E6E6"/><rect x="30.8" y="35.50" width="9" height="9.9" fill="#D0CECE"/><rect x="30.8" y="45.34" width="9" height="9.9" fill="#AEAAAA"/><rect x="30.8" y="55.18" width="9" height="9.9" fill="#757171"/><rect x="30.8" y="65.02" width="9" height="9.9" fill="#3B3838"/><rect x="30.8" y="74.86" width="9" height="9.9" fill="#171616"/><rect x="30.8" y="108.5" width="9" height="9" fill="#FFC000"/><rect x="44.1" y="22" width="9" height="9" fill="#44546A"/><rect x="44.1" y="35.50" width="9" height="9.9" fill="#D6DCE4"/><rect x="44.1" y="45.34" width="9" height="9.9" fill="#ADB9CA"/><rect x="44.1" y="55.18" width="9" height="9.9" fill="#8497B0"/><rect x="44.1" y="65.02" width="9" height="9.9" fill="#333F4F"/><rect x="44.1" y="74.86" width="9" height="9.9" fill="#222B35"/><rect x="44.1" y="108.5" width="9" height="9" fill="#FFFF00"/><rect x="57.4" y="22" width="9" height="9" fill="#4472C4"/><rect x="57.4" y="35.50" width="9" height="9.9" fill="#D9E1F2"/><rect x="57.4" y="45.34" width="9" height="9.9" fill="#B4C6E7"/><rect x="57.4" y="55.18" width="9" height="9.9" fill="#8EA9DB"/><rect x="57.4" y="65.02" width="9" height="9.9" fill="#305496"/><rect x="57.4" y="74.86" width="9" height="9.9" fill="#203764"/><rect x="57.4" y="108.5" width="9" height="9" fill="#92D050"/><rect x="70.7" y="22" width="9" height="9" fill="#ED7D31"/><rect x="70.7" y="35.50" width="9" height="9.9" fill="#FCE4D6"/><rect x="70.7" y="45.34" width="9" height="9.9" fill="#F8CBAD"/><rect x="70.7" y="55.18" width="9" height="9.9" fill="#F4B084"/><rect x="70.7" y="65.02" width="9" height="9.9" fill="#C65911"/><rect x="70.7" y="74.86" width="9" height="9.9" fill="#833C0C"/><rect x="70.7" y="108.5" width="9" height="9" fill="#00B050"/><rect x="84.0" y="22" width="9" height="9" fill="#A5A5A5"/><rect x="84.0" y="35.50" width="9" height="9.9" fill="#EDEDED"/><rect x="84.0" y="45.34" width="9" height="9.9" fill="#DBDBDB"/><rect x="84.0" y="55.18" width="9" height="9.9" fill="#C9C9C9"/><rect x="84.0" y="65.02" width="9" height="9.9" fill="#7B7B7B"/><rect x="84.0" y="74.86" width="9" height="9.9" fill="#525252"/><rect x="84.0" y="108.5" width="9" height="9" fill="#00B0F0"/><rect x="97.3" y="22" width="9" height="9" fill="#FFC000"/><rect x="97.3" y="35.50" width="9" height="9.9" fill="#FFF2CC"/><rect x="97.3" y="45.34" width="9" height="9.9" fill="#FFE699"/><rect x="97.3" y="55.18" width="9" height="9.9" fill="#FFD966"/><rect x="97.3" y="65.02" width="9" height="9.9" fill="#BF8F00"/><rect x="97.3" y="74.86" width="9" height="9.9" fill="#806000"/><rect x="97.3" y="108.5" width="9" height="9" fill="#0070C0"/><rect x="110.6" y="22" width="9" height="9" fill="#5B9BD5"/><rect x="110.6" y="35.50" width="9" height="9.9" fill="#DDEBF7"/><rect x="110.6" y="45.34" width="9" height="9.9" fill="#BDD7EE"/><rect x="110.6" y="55.18" width="9" height="9.9" fill="#9BC2E6"/><rect x="110.6" y="65.02" width="9" height="9.9" fill="#2F75B5"/><rect x="110.6" y="74.86" width="9" height="9.9" fill="#1F4E78"/><rect x="110.6" y="108.5" width="9" height="9" fill="#002060"/><rect x="123.9" y="22" width="9" height="9" fill="#70AD47"/><rect x="123.9" y="35.50" width="9" height="9.9" fill="#E2EFDA"/><rect x="123.9" y="45.34" width="9" height="9.9" fill="#C6E0B4"/><rect x="123.9" y="55.18" width="9" height="9.9" fill="#A9D08E"/><rect x="123.9" y="65.02" width="9" height="9.9" fill="#548235"/><rect x="123.9" y="74.86" width="9" height="9.9" fill="#375623"/><rect x="123.9" y="108.5" width="9" height="9" fill="#7030A0"/><rect x="4.5" y="22.5" width="8" height="8" fill="none" stroke="#e2e2e2" stroke-width="1"/></svg>
<div class="a" style="left:363px;top:745px;width:135px;height:15px;background:#e9e9e9;"></div>
<div class="t" style="left:369.9px;top:749.6px;font-size:10.43px;color:#555;transform:scaleX(0.916);-webkit-text-stroke:0.45px currentColor;">Standard Colors</div>
<div class="a" style="left:366px;top:778px;width:15px;height:16px;background:#d0d0d0;border:1px solid #9a9a9a"></div>
<div class="t" style="left:388.6px;top:780.7px;font-size:9.86px;color:#3a3a3a;transform:scaleX(0.975);">No Color</div>
<div class="a" style="left:389px;top:790px;width:8px;height:1px;background:#8a8a8a;"></div>
<div class="a" style="left:366px;top:796px;width:131px;height:1px;background:#e4e4e4;"></div>
<svg class="a" style="left:366px;top:800px" width="13" height="13" viewBox="0 0 13 13"><circle cx="6.5" cy="6.5" r="6" fill="#e07b39"/><path d="M6.5 6.5L12.5 6.5A6 6 0 0 1 9.5 11.7z" fill="#4a8f5a"/><path d="M6.5 6.5L9.5 11.7A6 6 0 0 1 3.5 11.7z" fill="#3f6ea8"/><path d="M6.5 6.5L3.5 11.7A6 6 0 0 1 0.5 6.5z" fill="#d0d0d0"/><path d="M6.5 6.5L0.5 6.5A6 6 0 0 1 3.5 1.3z" fill="#c95a3a"/><path d="M6.5 6.5L3.5 1.3A6 6 0 0 1 9.5 1.3z" fill="#eab080"/><circle cx="6.5" cy="6.5" r="1.2" fill="#fff"/></svg>
<div class="t" style="left:388.7px;top:801.2px;font-size:9.86px;color:#3a3a3a;transform:scaleX(0.949);">More Colors...</div>
<div class="a" style="left:389px;top:810px;width:9px;height:1px;background:#8a8a8a;"></div>
</body></html>
